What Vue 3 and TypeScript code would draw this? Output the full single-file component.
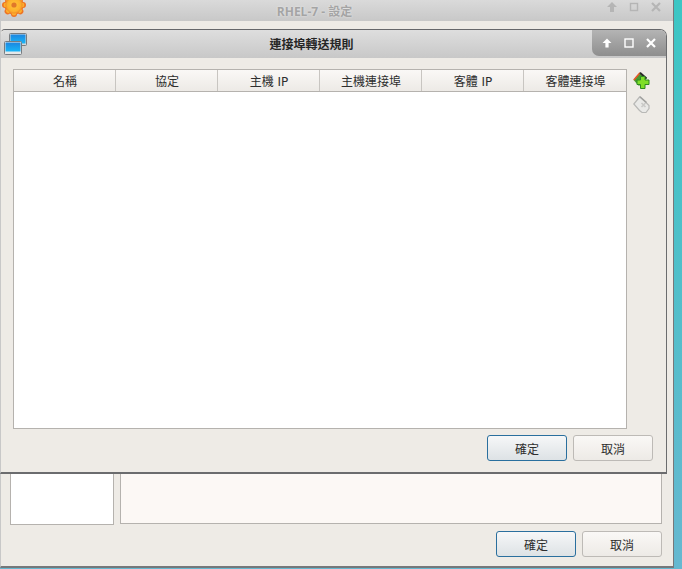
<script setup lang="ts">
const columns: string[] = ['名稱', '協定', '主機 IP', '主機連接埠', '客體 IP', '客體連接埠']
const teeth: number[] = [0, 45, 90, 135, 180, 225, 270, 315]
</script>

<template>
  <div class="desktop">
    <div class="outer">
      <header class="outer-bar">
        <svg class="gear" width="24" height="24" viewBox="0 0 24 24">
          <defs>
            <radialGradient id="gearFill" cx="50%" cy="50%" r="50%">
              <stop offset="0" stop-color="#ffc63a" />
              <stop offset="0.75" stop-color="#fdb02c" />
              <stop offset="1" stop-color="#f08a26" />
            </radialGradient>
          </defs>
          <g fill="#ee7424">
            <circle v-for="angle in teeth" :key="angle" cx="12" cy="3" r="3" :transform="`rotate(${angle} 12 12)`" />
          </g>
          <circle cx="12" cy="12" r="9.6" fill="#ee7424" />
          <g fill="#fdb02c">
            <circle v-for="angle in teeth" :key="angle" cx="12" cy="3.8" r="2.2" :transform="`rotate(${angle} 12 12)`" />
          </g>
          <circle cx="12" cy="12" r="8.6" fill="url(#gearFill)" />
          <circle cx="12" cy="12" r="2.6" fill="#e0782a" />
        </svg>
        <span class="outer-title">RHEL-7 - 設定</span>
        <div class="outer-controls">
          <svg width="12" height="12" viewBox="0 0 12 12"><path d="M6 1 L11 6 H8 V11 H4 V6 H1 Z" fill="#b5b5b5" /></svg>
          <svg width="12" height="12" viewBox="0 0 12 12"><rect x="2.5" y="2.5" width="7" height="7" fill="none" stroke="#b5b5b5" stroke-width="1.4" /></svg>
          <svg width="12" height="12" viewBox="0 0 12 12"><path d="M2 2 L10 10 M10 2 L2 10" stroke="#b5b5b5" stroke-width="2.2" /></svg>
        </div>
      </header>

      <div class="outer-body">
        <div class="behind">
          <div class="side-list"></div>
          <div class="detail"></div>
        </div>
        <div class="actions outer-actions">
          <button class="btn primary">確定</button>
          <button class="btn">取消</button>
        </div>
      </div>

      <section class="dialog">
        <header class="dialog-bar">
          <svg class="net-icon" width="23" height="22" viewBox="0 0 23 22">
            <defs>
              <linearGradient id="screen" x1="0" y1="0" x2="0" y2="1">
                <stop offset="0" stop-color="#1c86e0" />
                <stop offset="1" stop-color="#18b6f8" />
              </linearGradient>
            </defs>
            <rect x="5.5" y="0.5" width="17" height="12" rx="1" fill="#d5d8da" stroke="#777c80" />
            <rect x="6.5" y="1.5" width="15" height="9" fill="url(#screen)" />
            <rect x="0.5" y="8.5" width="17" height="13" rx="1" fill="#e6e8e9" stroke="#777c80" />
            <rect x="1.5" y="9.5" width="15" height="9" fill="url(#screen)" />
          </svg>
          <h1 class="dialog-title">連接埠轉送規則</h1>
          <div class="dialog-controls">
            <svg width="12" height="12" viewBox="0 0 12 12"><path d="M6 1.5 L10.5 6 H7.6 V10.5 H4.4 V6 H1.5 Z" fill="#fff" /></svg>
            <svg width="12" height="12" viewBox="0 0 12 12"><rect x="2" y="2" width="8" height="8" fill="none" stroke="#fff" stroke-width="1.4" /></svg>
            <svg width="12" height="12" viewBox="0 0 12 12"><path d="M2 2 L10 10 M10 2 L2 10" stroke="#fff" stroke-width="2.2" /></svg>
          </div>
        </header>

        <div class="dialog-body">
          <div class="content">
            <div class="table">
              <div class="thead">
                <div v-for="column in columns" :key="column" class="th">{{ column }}</div>
              </div>
              <div class="tbody"></div>
            </div>
            <div class="tools">
              <svg width="18" height="18" viewBox="0 0 18 18">
                <path d="M7 0.5 L0.5 8 L6 14 L14 6 Z" fill="#4a9a30" />
                <path d="M7 0.8 L0.8 8" stroke="#e8562a" stroke-width="1.6" />
                <path d="M7 0.8 L13.5 6.5" stroke="#2a2a2a" stroke-width="1.8" />
                <path d="M7.5 4.5 H12 V8 H16 V12.5 H12 V16.5 H7.5 V12.5 H4 V8 H7.5 Z" fill="#7ede28" stroke="#2f8a22" stroke-width="1" />
              </svg>
              <svg width="18" height="18" viewBox="0 0 18 18">
                <path d="M7 0.5 L0.8 8 L6.5 14.5 L9 16.5 H13 L16 12.5 V9.5 Z" fill="#e9e9e7" stroke="#b8b8b6" stroke-width="1.2" />
                <path d="M7 1 L13.5 6.5" stroke="#a2a2a0" stroke-width="1.6" />
                <path d="M8.5 7 L12.5 11 M12.5 7 L8.5 11" stroke="#c9c9c7" stroke-width="1.6" />
              </svg>
            </div>
          </div>
          <div class="actions">
            <button class="btn primary">確定</button>
            <button class="btn">取消</button>
          </div>
        </div>
      </section>
    </div>
  </div>
</template>

<style>
html, body { margin: 0; padding: 0; }
</style>

<style scoped>
.desktop {
  position: relative;
  width: 682px;
  height: 569px;
  overflow: hidden;
  background: linear-gradient(180deg, #3cc6c4 0%, #66b8d0 100%);
  font-family: "DejaVu Sans", "Noto Sans CJK TC", sans-serif;
  font-size: 12px;
  color: #2e2e2e;
}
.outer {
  position: relative;
  box-sizing: border-box;
  width: 674px;
  height: 568px;
  background: #eeebe6;
  border-right: 1px solid #77787a;
  border-bottom: 2px solid #77787a;
  border-left: 1px solid #c8c8c8;
}
.outer-bar {
  position: relative;
  display: flex;
  align-items: center;
  justify-content: center;
  height: 21px;
  background: linear-gradient(180deg, #dadada, #c8c8c8);
}
.gear {
  position: absolute;
  left: 1px;
  top: -7px;
}
.outer-title {
  margin-right: 45px;
  color: #a4a4a4;
  font-family: "Open Sans", "Noto Sans CJK TC", sans-serif;
  font-weight: 700;
  font-size: 12px;
  text-shadow: 0 0 2px #eeeeee;
}
.outer-controls {
  position: absolute;
  right: 11px;
  top: 1px;
  display: flex;
  gap: 10px;
}
.outer-body {
  display: flex;
  flex-direction: column;
  height: 545px;
  padding: 0 11px 0 9px;
}
.behind {
  display: flex;
  gap: 6px;
  height: 404px;
  margin-top: 100px;
}
.side-list {
  box-sizing: border-box;
  width: 104px;
  background: #fff;
  border: 1px solid #b5b2ae;
}
.detail {
  box-sizing: border-box;
  flex: 1;
  background: #fcf8f5;
  border: 1px solid #b5b2ae;
  margin-bottom: 1px;
}
.actions {
  display: flex;
  justify-content: flex-end;
  gap: 6px;
}
.outer-actions {
  margin-top: 6px;
}
.btn {
  box-sizing: border-box;
  width: 80px;
  height: 26px;
  padding: 0;
  border: 1px solid #bdbab6;
  border-radius: 3px;
  background: linear-gradient(180deg, #faf8f6, #edeae6);
  font: inherit;
  color: #2e2e2e;
}
.btn.primary {
  border-color: #2a6f9e;
  background: linear-gradient(180deg, #f6f7f8, #dde2e5);
}
.dialog {
  position: absolute;
  left: -1px;
  top: 29px;
  box-sizing: border-box;
  width: 667px;
  height: 445px;
  background: #eeebe6;
  border: 1px solid #6b6c6e;
  border-left-color: #c8c8c8;
  border-top-color: #66676a;
  border-bottom-width: 2px;
  border-top-left-radius: 5px;
  border-top-right-radius: 7px;
}
.dialog-bar {
  position: relative;
  display: flex;
  align-items: center;
  justify-content: center;
  height: 28px;
  background: linear-gradient(180deg, #dedede, #c8c8c8);
  border-top-left-radius: 5px;
  border-top-right-radius: 7px;
}
.net-icon {
  position: absolute;
  left: 3px;
  top: 3px;
}
.dialog-title {
  margin: 0 44px 1px 0;
  font-size: 12px;
  font-weight: 700;
  color: #262626;
}
.dialog-controls {
  position: absolute;
  right: 0;
  top: 0;
  display: flex;
  align-items: center;
  justify-content: center;
  gap: 10px;
  box-sizing: border-box;
  width: 74px;
  height: 26px;
  background: linear-gradient(180deg, #b4b4b4, #8e8e8e);
  border-radius: 0 6px 0 7px;
}
.dialog-body {
  box-sizing: border-box;
  height: 414px;
  padding: 11px 13px 0 12px;
}
.content {
  display: flex;
  gap: 6px;
}
.table {
  box-sizing: border-box;
  width: 614px;
  height: 360px;
  display: flex;
  flex-direction: column;
  background: #fff;
  border: 1px solid #b5b2ae;
}
.thead {
  display: grid;
  grid-template-columns: repeat(5, 102px) 1fr;
  height: 22px;
  flex: none;
  box-sizing: border-box;
  background: linear-gradient(180deg, #faf8f6, #edeae6);
  border-bottom: 1px solid #b5b2ae;
}
.th {
  display: flex;
  align-items: center;
  justify-content: center;
  padding-left: 1px;
  border-right: 1px solid #c8c5c1;
  color: #2e2e2e;
}
.th:last-child { border-right: 0; }
.tbody { flex: 1; }
.tools {
  display: flex;
  flex-direction: column;
  gap: 6px;
  padding-top: 3px;
}
.dialog-body > .actions {
  margin-top: 6px;
}
</style>
